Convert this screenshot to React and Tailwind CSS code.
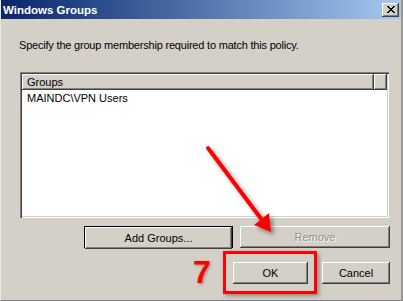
export default function App() {
  const btn =
    "flex items-center justify-center h-[22px] bg-[#d4d0c8] text-[11px] shadow-[inset_-1px_-1px_#404040,inset_1px_1px_#ffffff,inset_-2px_-2px_#808080]";
  return (
    <div className="relative w-[403px] h-[301px] bg-[#d4d0c8] overflow-hidden font-['Liberation_Sans',Arial,sans-serif] border-l border-l-[#e8e6e0] border-r-2 border-r-[#9a9892] border-b border-b-[#808080]">
      {/* Title bar */}
      <div className="h-[19px] flex items-center justify-between pl-[2px] pr-[2px] bg-gradient-to-r from-[#0a246a] to-[#a6caf0]">
        <span className="text-white font-bold text-[11.5px] leading-[13px] pt-[1px]">Windows Groups</span>
        <div className="w-[17px] h-[14px] bg-[#d4d0c8] flex items-center justify-center shadow-[inset_-1px_-1px_#404040,inset_1px_1px_#ffffff,inset_-2px_-2px_#808080]">
          <svg width="8" height="7" viewBox="0 0 8 7" shapeRendering="crispEdges">
            <path d="M0 0h2v1h-2zM6 0h2v1h-2zM1 1h2v1h-2zM5 1h2v1h-2zM2 2h4v1h-4zM3 3h2v1h-2zM2 4h4v1h-4zM1 5h2v1h-2zM5 5h2v1h-2zM0 6h2v1h-2zM6 6h2v1h-2z" fill="#000" />
          </svg>
        </div>
      </div>

      {/* Body */}
      <div className="flex flex-col">
        <p className="mt-[20px] ml-[18px] text-[11px] leading-[13px] tracking-[-0.2px] text-black">
          Specify the group membership required to match this policy.
        </p>

        {/* List */}
        <div className="mt-[20px] ml-[19px] w-[369px] h-[146px] bg-white flex flex-col shadow-[inset_1px_1px_#808080,inset_2px_2px_#404040,inset_-1px_-1px_#ffffff,inset_-2px_-2px_#d4d0c8] p-[2px]">
          <div className="flex h-[16px]">
            <div className="flex-1 flex items-center pl-[5px] bg-[#d4d0c8] text-[11px] text-black shadow-[inset_-1px_-1px_#404040,inset_1px_1px_#ffffff,inset_-2px_-2px_#808080]">
              Groups
            </div>
            <div className="w-[13px] bg-[#d4d0c8] shadow-[inset_-1px_-1px_#404040,inset_1px_1px_#ffffff,inset_-2px_-2px_#808080]" />
          </div>
          <div className="pl-[5px] pt-[2px] text-[11px] leading-[13px] text-black">MAINDC\VPN Users</div>
        </div>

        {/* Add / Remove */}
        <div className="mt-[8px] ml-[83px] flex gap-[7px]">
          <div className="w-[149px] h-[22px] border border-black">
            <div className={btn + " h-[20px] text-black"}>Add Groups...</div>
          </div>
          <div className={btn + " w-[150px] text-[#8e8c88] [text-shadow:1px_1px_#ffffff]"}>Remove</div>
        </div>

        {/* OK / Cancel */}
        <div className="mt-[14px] ml-[232px] flex gap-[14px]">
          <div className={btn + " w-[75px] text-black"}>OK</div>
          <div className={btn + " w-[68px] text-black"}>Cancel</div>
        </div>
      </div>

      {/* Annotations */}
      <div className="absolute left-[222px] top-[251px] w-[94px] h-[43px] border-[3px] border-[#ff0000] shadow-[2px_2px_4px_rgba(0,0,0,0.35)]" />
      <div className="absolute left-[192px] top-[253px] text-[32px] leading-[38px] font-bold text-[#ff0000] [text-shadow:1px_1px_3px_rgba(0,0,0,0.35)]">
        7
      </div>
      <svg className="absolute left-0 top-0" width="403" height="301" viewBox="0 0 403 301">
        <defs>
          <filter id="sh" x="-20%" y="-20%" width="140%" height="140%">
            <feGaussianBlur in="SourceAlpha" stdDeviation="2" />
            <feOffset dx="3" dy="3" result="b" />
            <feComponentTransfer>
              <feFuncA type="linear" slope="0.4" />
            </feComponentTransfer>
            <feMerge>
              <feMergeNode />
              <feMergeNode in="SourceGraphic" />
            </feMerge>
          </filter>
        </defs>
        <g filter="url(#sh)">
          <line x1="207" y1="148" x2="261" y2="220" stroke="#ff0000" strokeWidth="4" strokeLinecap="round" />
          <polygon points="270,232 253,225 268,213" fill="#ff0000" />
        </g>
      </svg>
    </div>
  );
}
